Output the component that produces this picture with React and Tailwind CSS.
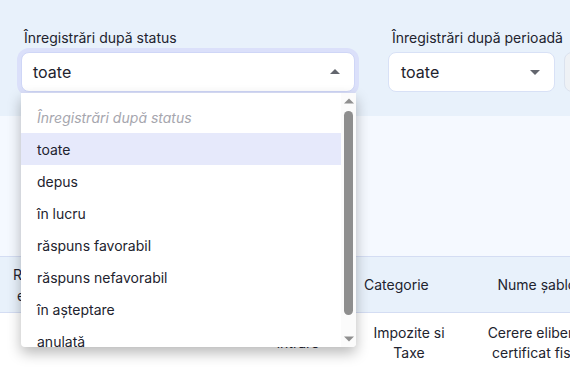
import React from "react";

function TriUp({ className }) {
  return (
    <svg width="10" height="5" viewBox="0 0 10 5" className={className}>
      <path d="M0 5 L5 0 L10 5 Z" fill="currentColor" />
    </svg>
  );
}
function TriDown({ className }) {
  return (
    <svg width="10" height="5" viewBox="0 0 10 5" className={className}>
      <path d="M0 0 L10 0 L5 5 Z" fill="currentColor" />
    </svg>
  );
}

const items = [
  "toate",
  "depus",
  "în lucru",
  "răspuns favorabil",
  "răspuns nefavorabil",
  "în așteptare",
  "anulată",
];

export default function App() {
  return (
    <div className="w-[570px] h-[370px] overflow-hidden bg-white font-[Inter,'Liberation_Sans',sans-serif] text-[#22232e]">
      {/* Filter band */}
      <div className="h-[116px] bg-[#e8f1fb] pt-[28px] pl-[21px] flex gap-[33px] whitespace-nowrap">
        {/* status */}
        <div className="w-[334px] shrink-0 flex flex-col">
          <div className="pl-[3px] text-[14px] leading-[20px] mb-[4px]">Înregistrări după status</div>
          <div className="relative h-[40px] rounded-[8px] bg-white border border-[#cfd6f7] ring-[4px] ring-[#dbe0fa] flex items-center pl-[11px] pr-[14px]">
            <span className="text-[16px] flex-1">toate</span>
            <TriUp className="text-[#63666e] mb-[1px]" />
            {/* dropdown */}
            <div className="absolute left-[-1px] top-[40px] w-[335px] h-[254px] bg-white rounded-b-[4px] shadow-[0_6px_14px_rgba(0,0,0,0.28)] flex overflow-hidden z-10">
              <div className="flex-1 pt-[8px] text-[14px]">
                <div className="h-[32px] flex items-center pl-[16px] italic text-[#a6a6ae]">Înregistrări după status</div>
                {items.map((it, i) => (
                  <div
                    key={it}
                    className={
                      "h-[32px] flex items-center pl-[16px] " + (i === 0 ? "bg-[#e6e9fb]" : "")
                    }
                  >
                    {it}
                  </div>
                ))}
              </div>
              <div className="w-[15px] bg-[#fbfbfb] flex flex-col items-center pt-[5px] pb-[5px]">
                <TriUp className="text-[#8f8f8f] w-[10px] h-[6px]" />
                <div className="mt-[7px] w-[9px] h-[204px] rounded-full bg-[#8e8e8e]" />
                <div className="flex-1" />
                <TriDown className="text-[#8f8f8f] w-[10px] h-[6px]" />
              </div>
            </div>
          </div>
        </div>
        {/* period */}
        <div className="w-[167px] shrink-0 flex flex-col">
          <div className="pl-[4px] text-[14px] leading-[20px] mb-[4px]">Înregistrări după perioadă</div>
          <div className="h-[40px] rounded-[8px] bg-white border border-[#d8e1f6] flex items-center pl-[12px] pr-[14px]">
            <span className="text-[16px] flex-1">toate</span>
            <TriDown className="text-[#63666e] mt-[1px]" />
          </div>
        </div>
        {/* third */}
        <div className="w-[120px] shrink-0 flex flex-col -ml-[24px]">
          <div className="h-[20px] mb-[4px]" />
          <div className="h-[40px] rounded-[8px] bg-[#eef1f5] border border-[#dbe2ee]" />
        </div>
      </div>

      {/* middle */}
      <div className="h-[140px] bg-[#f5f9ff]" />

      {/* table header */}
      <div className="h-[57px] bg-[#e8f1fb] border-y border-[#d4ddf3] flex items-center text-[14px] whitespace-nowrap">
        <div className="w-[240px] shrink-0 pl-[13px] leading-[21px]">
          <div>Registru</div>
          <div className="pl-[4px]">evidență</div>
        </div>
        <div className="w-[116px] shrink-0 text-center">Tip</div>
        <div className="w-[106px] shrink-0 pl-[8px]">Categorie</div>
        <div className="w-[158px] shrink-0 text-center">Nume șablon</div>
      </div>

      {/* row */}
      <div className="h-[60px] flex items-center text-[14px] leading-[20px] whitespace-nowrap">
        <div className="w-[240px] shrink-0" />
        <div className="w-[116px] shrink-0 text-center">intrare</div>
        <div className="w-[106px] shrink-0 text-center">
          <div>Impozite si</div>
          <div>Taxe</div>
        </div>
        <div className="w-[158px] shrink-0 text-center">
          <div>Cerere eliberare</div>
          <div>certificat fiscal</div>
        </div>
      </div>
    </div>
  );
}
